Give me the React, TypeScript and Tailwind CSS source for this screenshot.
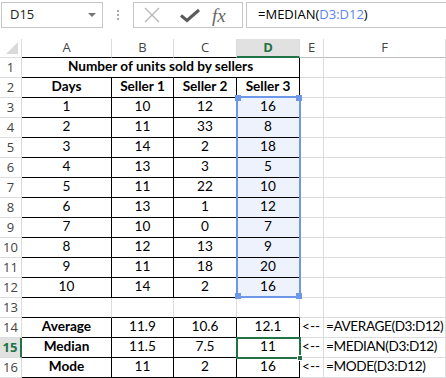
import React from 'react';

const GRID = 'border-[#dadcdd]';
const BLACK = 'border-black';
const cols = ['A', 'B', 'C', 'D', 'E', 'F'];

const s1 = [10, 11, 14, 13, 11, 13, 10, 12, 11, 14];
const s2 = [12, 33, 2, 3, 22, 1, 0, 13, 18, 2];
const s3 = [16, 8, 18, 5, 10, 12, 7, 9, 20, 16];

type Row = { n: number; cells: string[]; bold?: boolean; boldFirst?: boolean };

const rows: Row[] = [
  { n: 2, cells: ['Days', 'Seller 1', 'Seller 2', 'Seller 3', '', ''], bold: true },
  ...s1.map((v, i) => ({
    n: i + 3,
    cells: [String(i + 1), String(v), String(s2[i]), String(s3[i]), '', ''],
  })),
  { n: 13, cells: ['', '', '', '', '', ''] },
  { n: 14, cells: ['Average', '11.9', '10.6', '12.1', '<--', '=AVERAGE(D3:D12)'], boldFirst: true },
  { n: 15, cells: ['Median', '11.5', '7.5', '11', '<--', '=MEDIAN(D3:D12)'], boldFirst: true },
  { n: 16, cells: ['Mode', '11', '2', '16', '<--', '=MODE(D3:D12)'], boldFirst: true },
];

const inTable = (r: number) => (r >= 1 && r <= 12) || (r >= 14 && r <= 16);

function RowHeader({ n }: { n: number }) {
  const active = n === 15;
  return (
    <div
      className={
        'h-[20px] flex items-center justify-center border-b text-[13px] ' +
        GRID +
        (active
          ? ' border-r-2 border-r-[#217346] text-[#217346] font-bold bg-[#e1e1e1]'
          : ' border-r text-[#444]')
      }
      style={{ fontFamily: '"Open Sans", sans-serif' }}
    >
      {n}
    </div>
  );
}

function Cell({ r, c, text, bold }: { r: number; c: number; text: string; bold?: boolean }) {
  const table = c <= 3;
  const right = table && inTable(r) ? BLACK : GRID;
  const bottom = table && (inTable(r) || inTable(r + 1)) ? 'border-b-black' : 'border-b-[#dadcdd]';
  const sel = c === 3 && r >= 3 && r <= 12;
  const align =
    c === 5 ? 'justify-start pl-[2px] tracking-[-0.4px]' : c === 4 ? 'justify-start pl-[2px]' : 'justify-center';
  return (
    <div
      className={
        'h-[20px] flex items-end pb-[1px] border-r border-b text-[13.6px] text-black whitespace-nowrap overflow-visible ' +
        right +
        ' ' +
        bottom +
        ' ' +
        align +
        (sel ? ' bg-[#eef2fd]' : '') +
        (bold ? ' font-bold' : '')
      }
    >
      {text}
    </div>
  );
}

export default function App() {
  return (
    <div
      className="relative w-[446px] h-[378px] bg-white overflow-hidden"
      style={{ fontFamily: 'Lato, "Liberation Sans", sans-serif' }}
    >
      {/* formula bar */}
      <div className="h-[39px] flex items-start pt-[2px]" style={{ fontFamily: '"Open Sans", sans-serif' }}>
        <div className="ml-[1px] w-[102px] h-[26px] border border-[#c6c6c6] flex items-center justify-between pl-[8px] pr-[6px] text-[13px] text-[#222]">
          <span>D15</span>
          <span className="w-0 h-0 border-l-[4px] border-r-[4px] border-t-[4px] border-l-transparent border-r-transparent border-t-[#777]" />
        </div>
        <div className="w-[30px] h-[26px] flex flex-col items-center justify-center gap-[2px]">
          <span className="w-[2px] h-[2px] bg-[#aaa]" />
          <span className="w-[2px] h-[2px] bg-[#aaa]" />
          <span className="w-[2px] h-[2px] bg-[#aaa]" />
        </div>
        <div className="w-[110px] h-[26px] border border-[#c6c6c6] flex items-center">
          <svg width="18" height="18" viewBox="0 0 18 18" className="ml-[9px]">
            <path d="M2 2 L16 16 M16 2 L2 16" stroke="#b8b8b8" strokeWidth="1.4" fill="none" />
          </svg>
          <svg width="22" height="18" viewBox="0 0 22 18" className="ml-[18px]">
            <path d="M2 9.5 L8 14.5 L20 4" stroke="#5a5a5a" strokeWidth="3" fill="none" strokeLinejoin="miter" />
          </svg>
          <span
            className="ml-[11px] text-[19px] italic text-[#666] leading-none"
            style={{ fontFamily: '"Liberation Serif", serif' }}
          >
            fx
          </span>
        </div>
        <div className="ml-[3px] flex-1 h-[26px] border border-r-0 border-[#c6c6c6] flex items-center pl-[11px] text-[13px] text-black">
          =MEDIAN(<span className="text-[#5b86f0]">D3:D12</span>)
        </div>
      </div>

      {/* sheet */}
      <div className="grid grid-cols-[22px_90px_62px_63px_63px_24px_122px]">
        {/* column headers */}
        <div className={'h-[19px] border-r border-b ' + GRID + ' relative'}>
          <svg width="22" height="19" className="absolute left-0 top-0">
            <path d="M6 15 L18 15 L18 3 Z" fill="#dadada" />
          </svg>
        </div>
        {cols.map((c, i) => (
          <div
            key={c}
            className={
              'h-[19px] flex items-center justify-center text-[13px] border-r ' +
              GRID +
              (c === 'D'
                ? ' bg-[#e1e1e1] text-[#217346] font-bold border-b-2 border-b-[#217346]'
                : i < 3
                ? ' border-b border-b-black text-[#444]'
                : ' border-b border-b-[#bdbdbd] text-[#444]')
            }
            style={{ fontFamily: '"Open Sans", sans-serif' }}
          >
            {c}
          </div>
        ))}

        {/* row 1 */}
        <RowHeader n={1} />
        <div className="col-span-4 h-[20px] flex items-end pb-[1px] justify-center border-r border-b border-black text-[13.6px] font-bold text-black">
          Number of units sold by sellers
        </div>
        <div className={'h-[20px] border-r border-b ' + GRID} />
        <div className={'h-[20px] border-r border-b ' + GRID} />

        {rows.map((row) => (
          <React.Fragment key={row.n}>
            <RowHeader n={row.n} />
            {row.cells.map((t, c) => (
              <Cell
                key={c}
                r={row.n}
                c={c}
                text={t}
                bold={row.bold ? c <= 3 : row.boldFirst && c === 0}
              />
            ))}
          </React.Fragment>
        ))}
      </div>

      {/* range highlight D3:D12 */}
      <div className="absolute left-[236px] top-[96px] w-[65px] h-[202px] border-2 border-[#6d98e8]">
        <span className="absolute left-[-3px] top-[-3px] w-[6px] h-[6px] bg-[#6d98e8]" />
        <span className="absolute right-[-3px] top-[-3px] w-[6px] h-[6px] bg-[#6d98e8]" />
        <span className="absolute left-[-3px] bottom-[-3px] w-[6px] h-[6px] bg-[#6d98e8]" />
        <span className="absolute right-[-3px] bottom-[-3px] w-[6px] h-[6px] bg-[#6d98e8]" />
      </div>

      {/* active cell D15 */}
      <div className="absolute left-[236px] top-[337px] w-[65px] h-[22px] border-2 border-[#217346]">
        <span className="absolute right-[-4px] bottom-[-4px] w-[6px] h-[6px] bg-[#217346] border border-white" />
      </div>
    </div>
  );
}
